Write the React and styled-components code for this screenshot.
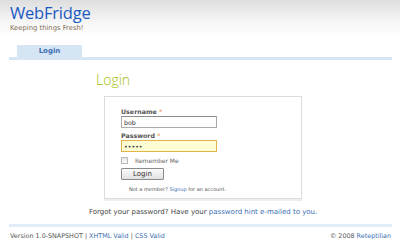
import styled, { createGlobalStyle } from "styled-components";

const Global = createGlobalStyle`
  html, body { margin: 0; padding: 0; background: #fff; }
  body { width: 400px; height: 244px; overflow: hidden; font-family: "DejaVu Sans", Verdana, sans-serif; }
`;

const Page = styled.div`
  width: 400px;
  height: 244px;
  display: flex;
  flex-direction: column;
`;

const Header = styled.div`
  height: 38px;
  padding: 4px 10px 0;
  box-sizing: border-box;
  background: linear-gradient(#dedede 0%, #f7f7f7 60%, #fff 100%);
`;

const Title = styled.div`
  font-family: "Open Sans", "Liberation Sans", sans-serif;
  font-size: 16.5px;
  line-height: 18px;
  color: #1c59c4;
  letter-spacing: -0.2px;
`;

const Tagline = styled.div`
  margin-top: 2px;
  font-size: 6.8px;
  color: #7d6f52;
`;

const Nav = styled.div`
  margin: 7px 8px 0 9px;
  padding-left: 8px;
  border-bottom: 3px solid #d6e6f4;
  display: flex;
`;

const Tab = styled.div`
  width: 65px;
  height: 12px;
  background: #d5e5f4;
  color: #3d6fb3;
  font-weight: bold;
  font-size: 7px;
  display: flex;
  align-items: center;
  justify-content: center;
`;

const Main = styled.div`
  flex: 1;
  display: flex;
  flex-direction: column;
`;

const Heading = styled.h2`
  margin: 11px 0 0 96px;
  font-family: "Open Sans", "Liberation Sans", sans-serif;
  font-weight: 300;
  font-size: 14px;
  line-height: 18px;
  color: #a4c00c;
`;

const Box = styled.div`
  margin: 7px 0 0 104px;
  width: 198px;
  height: 103px;
  box-sizing: border-box;
  border: 1px solid #dcdcdc;
  box-shadow: 0 2px 0 #eeeeee;
  padding: 10px 0 0 16px;
  display: flex;
  flex-direction: column;
`;

const Label = styled.div`
  font-size: 6.3px;
  font-weight: bold;
  color: #555;
  line-height: 9px;
  margin-top: ${(p) => p.$gap || 0}px;
  span { color: #f08a3c; font-weight: normal; }
`;

const Input = styled.div`
  width: 96px;
  height: 12px;
  box-sizing: border-box;
  border: 1px solid ${(p) => (p.$focus ? "#e4b44c" : "#aaa")};
  border-top-color: ${(p) => (p.$focus ? "#e4b44c" : "#8c8c8c")};
  background: ${(p) => (p.$focus ? "#fffdd2" : "#fff")};
  font-size: 6.3px;
  color: #333;
  padding-left: 2px;
  display: flex;
  align-items: center;
`;

const Check = styled.div`
  display: flex;
  align-items: center;
  gap: 7px;
  margin-top: 5px;
  font-size: 6px;
  color: #666;
`;

const CheckBox = styled.div`
  width: 7px;
  height: 7px;
  box-sizing: border-box;
  border: 1px solid #bbb;
  background: linear-gradient(#e6e6e6, #f8f8f8);
`;

const Button = styled.div`
  margin-top: 4px;
  width: 43px;
  height: 12px;
  box-sizing: border-box;
  border: 1px solid #8a8a8a;
  border-radius: 1px;
  background: linear-gradient(#fafafa, #e2e2e2);
  font-size: 7px;
  color: #333;
  display: flex;
  align-items: center;
  justify-content: center;
`;

const Small = styled.div`
  margin: 6px 0 0 8px;
  font-size: 5px;
  color: #555;
`;

const Link = styled.span`
  color: #3d6fb3;
`;

const Forgot = styled.div`
  margin: 9px 0 0 89px;
  font-size: 7px;
  color: #444;
`;

const Footer = styled.div`
  margin: 0 8px 0 9px;
  border-top: 3px solid #e3edf7;
  height: 20px;
  display: flex;
  justify-content: space-between;
  align-items: center;
  padding: 1px 1px 0;
  box-sizing: border-box;
  font-size: 6.4px;
  color: #555;
`;

export default function App() {
  return (
    <Page>
      <Global />
      <Header>
        <Title>WebFridge</Title>
        <Tagline>Keeping things Fresh!</Tagline>
      </Header>
      <Nav>
        <Tab>Login</Tab>
      </Nav>
      <Main>
        <Heading>Login</Heading>
        <Box>
          <Label>
            Username <span>*</span>
          </Label>
          <Input>bob</Input>
          <Label $gap={3}>
            Password <span>*</span>
          </Label>
          <Input $focus>•••••</Input>
          <Check>
            <CheckBox />
            Remember Me
          </Check>
          <Button>Login</Button>
          <Small>
            Not a member? <Link>Signup</Link> for an account.
          </Small>
        </Box>
        <Forgot>
          Forgot your password? Have your <Link>password hint e-mailed to you.</Link>
        </Forgot>
      </Main>
      <Footer>
        <span>
          Version 1.0-SNAPSHOT | <Link>XHTML Valid</Link> | <Link>CSS Valid</Link>
        </span>
        <span>
          © 2008 <Link>Reteptilian</Link>
        </span>
      </Footer>
    </Page>
  );
}
